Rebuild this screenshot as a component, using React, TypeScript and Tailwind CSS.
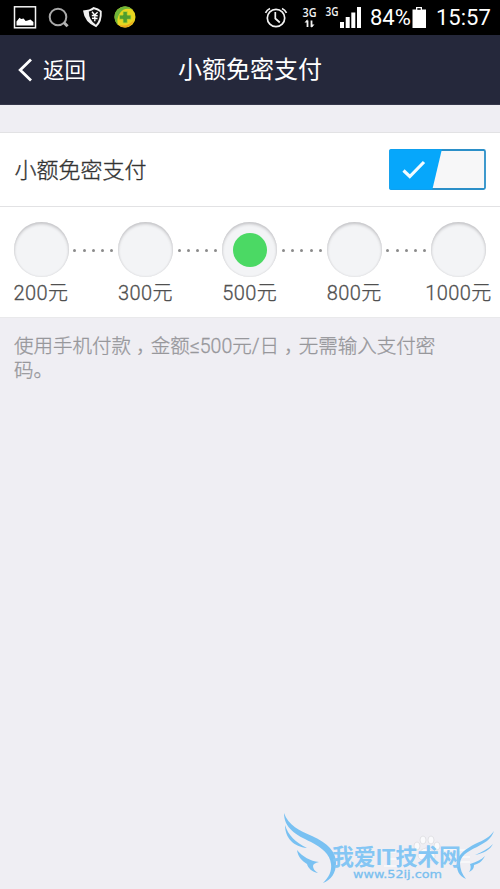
import React, { useState } from 'react';

const AMOUNTS = [200, 300, 500, 800, 1000];

const StatusBar: React.FC = () => (
  <div className="h-[35px] bg-black flex items-center text-white">
    <svg className="w-[150px] h-[35px] shrink-0" viewBox="0 0 150 35" fill="none">
      <rect x="14.5" y="6.8" width="21" height="21" stroke="#f4f4f4" strokeWidth="1.5" />
      <path d="M16.500 25.500v-4l3-3.700 1.600 1.200 2.500-.5 2 2.500 2-.6 2.800-.9 3 2.500v3.500z" fill="#fff" />
      <circle cx="58" cy="17" r="8.300" stroke="#a9a9a9" strokeWidth="2" />
      <path d="M63.800 22.500l3.800 3.800" stroke="#b5b5b5" strokeWidth="3" />
      <path d="M83 10.500Q90 10 93.500 7q5 1 8.200 4 .8 11-5.500 16.200Q84.500 22.500 83 10.500z" fill="#f1f1f1" />
      <path d="M88.800 11.500q3.500-.6 5.200-2.200 3 .5 5.900 2.700.3 8-4 12.800-7.100-4.800-7.100-13.300z" fill="#101010" />
      <path d="M92 11.800l2.700 3.200 2.900-2.800M91.800 15.500l5.900.3M92 18.200l5.500.3M94.800 15v6.300" stroke="#fff" strokeWidth="1.400" />
      <circle cx="125" cy="17" r="10.500" fill="#e9d620" />
      <path d="M114.500 17a10.500 10.500 0 0 1 18-7.500Q124 7 120 13t-2 12q-3.500-3.500-3.500-8z" fill="#6fb53a" />
      <path d="M118 24.800q10 3 16-5-2 6.500-8 7.600-5 .4-8-2.600z" fill="#eea61e" />
      <path d="M123 11.500h4.300v3.600h3.700v4.200h-3.700v3.600H123v-3.600h-3.700v-4.200h3.700z" fill="#4f9d2e" stroke="#c3d62c" strokeWidth="0.800" />
    </svg>
    <svg className="w-[105px] h-[35px] ml-auto shrink-0" viewBox="260 0 105 35" fill="none" stroke="#f2f2f2">
      <circle cx="276" cy="18" r="8.700" strokeWidth="1.700" />
      <path d="M275.300 12v6.500l4.500 4M265.500 12.800q1.500-3 4.500-4.300M282 8.500q3 1.300 4.500 4.300" strokeWidth="1.700" />
      <g fill="#f2f2f2" stroke="none" fontFamily="'Open Sans', sans-serif" fontWeight="600">
        <text x="302.500" y="17" fontSize="13" textLength="14" lengthAdjust="spacingAndGlyphs">3G</text>
        <text x="325.500" y="16" fontSize="12.500" textLength="13" lengthAdjust="spacingAndGlyphs">3G</text>
      </g>
      <path d="M307.500 27v-6.500M311.500 20.500V27" strokeWidth="1.800" />
      <path d="M304.500 22.500l3-3.200v3.200zM314.500 24.500l-3 3.300v-3.300z" fill="#f2f2f2" stroke="none" />
      <path d="M340 22h4v6h-4zM345.700 17h4v11h-4zM351.300 12.500h4V28h-4zM357 7h4v21h-4z" fill="#fff" stroke="none" />
    </svg>
    <span className="w-[41px] ml-[5px] pt-px text-[22px] leading-none whitespace-nowrap">84%</span>
    <svg className="w-[17px] h-[35px] shrink-0" viewBox="0 0 17 35">
      <path d="M1.500 9.500H5V7h6v2.500h4V28H1.500z" fill="#fff" />
      <path d="M6.300 8.200h3.400v1.600H6.300z" fill="#000" />
    </svg>
    <span className="w-[72px] pl-[8px] pt-px text-[22px] leading-none whitespace-nowrap">15:57</span>
  </div>
);

const Header: React.FC = () => (
  <header className="h-[70px] bg-[#25283b] grid grid-cols-[1fr_auto_1fr] items-center text-white border-b border-[#35374a]">
    <button className="flex items-center pl-[18px] text-[21.5px]">
      <svg className="w-[15px] h-6 mr-[10px]" viewBox="0 0 15 24" fill="none" stroke="#fff" strokeWidth="2.800">
        <path d="M13 1.500L2.200 12 13 22.500" />
      </svg>
      <span className="pt-1">返回</span>
    </button>
    <h1 className="text-[24px] leading-none">小额免密支付</h1>
  </header>
);

const Toggle: React.FC<{ on: boolean; onChange: () => void }> = ({ on, onChange }) => (
  <button role="switch" aria-checked={on} onClick={onChange} className="w-[97px] h-[41px]">
    <svg viewBox="0 0 97 41" className="w-full h-full" fill="none">
      <rect x="1" y="1" width="95" height="39" rx="1.500" fill="#f7f7f8" stroke="#2b8fc8" strokeWidth="1.800" />
      <path d="M1.500.3h51.400L43.300 40.700H1.500Q.3 40.700.3 39.500v-38Q.3.300 1.500.300z" fill="#06a7fb" />
      <path d="M14.500 21.500l6.300 6L35 13" stroke="#f2fbff" strokeWidth="3.200" />
    </svg>
  </button>
);

const Dots: React.FC = () => (
  <div className="flex-1 h-[55px] flex items-center justify-center gap-[6.2px] pt-0.5">
    {[0, 1, 2, 3, 4].map((i) => (
      <span key={i} className="size-[3px] rounded-full bg-[#8b8b8b]" />
    ))}
  </div>
);

// full-width comma centred in its cell
const Comma: React.FC = () => (
  <span className="px-[5px] [font-feature-settings:'halt']">，</span>
);

const Watermark: React.FC = () => (
  <svg className="w-[230px] h-[89px]" viewBox="270 800 230 89">
    <g fill="#fafafc" stroke="#dddde1" strokeWidth="0.800">
      <ellipse cx="417" cy="846" rx="3" ry="4" />
      <ellipse cx="423" cy="840" rx="3" ry="4" />
      <ellipse cx="431" cy="840" rx="3" ry="4" />
      <ellipse cx="437" cy="846" rx="3" ry="4" />
      <path d="M418 855q2-6 8-7 6 0 9 7 1 6-8 5-9 1-9-5z" />
    </g>
    <path d="M384 852h15v14h-15M440 850h29M455 857h15M390 859h8M457 862h13" fill="none" stroke="#fafafc" strokeWidth="1.500" />
    <g fill="#79c1f2">
      <path d="M284 813c4 12 16 18 28 23 16 7 24 16 24 27 0 10-5 17-13 20 6-6 9-12 8-19-1-10-9-16-20-22-15-7-27-14-27-29z" />
      <path d="M285 825c3 10 10 17 22 23-13-1-22-10-22-23z" />
      <path d="M297 850c6 7 13 11 22 12-4 1-6 2-6 4 0 3 2 5 5 7-6-1-10-5-11-9-5-3-9-7-10-14z" />
      <path d="M494 831c-3 9-10 12-17 16-11 5-16 9-17 16 0 6 2 11 6 16-7-3-10-9-9-17 2-9 9-13 18-18 9-4 15-7 19-13z" />
      <path d="M493 844c-3 6-9 9-18 11 7-3 13-6 18-11z" />
      <path d="M485 856c-3 6-7 8-11 9 0 3-1 5-5 7 2-3 2-5 1-8 6-2 11-4 15-8z" />
    </g>
    <text x="332" y="865" fontSize="22.500" fontWeight="700" fill="#84c6f4" textLength="129" lengthAdjust="spacingAndGlyphs">我爱IT技术网</text>
    <text x="353" y="878" fontSize="11" fill="#79bfef" stroke="#79bfef" strokeWidth="0.300" fontFamily="'DejaVu Sans', sans-serif" textLength="89" lengthAdjust="spacingAndGlyphs">www.52ij.com</text>
  </svg>
);

const App: React.FC = () => {
  const [enabled, setEnabled] = useState(true);
  const [amount, setAmount] = useState(500);

  return (
    <div className="relative w-[500px] h-[889px] overflow-hidden bg-[#efeef3] font-[Roboto,'Noto_Sans_CJK_SC',sans-serif]">
      <StatusBar />
      <Header />

      <main className="pt-[27px]">
        <section className="bg-white border-t border-[#e2e2e4]">
          <div className="h-[74px] pl-[14.5px] pr-[14px] flex items-center justify-between border-b border-[#e2e2e4]">
            <span className="text-[22px] text-[#333] font-light [-webkit-text-stroke:0.35px] pt-0.5">小额免密支付</span>
            <Toggle on={enabled} onChange={() => setEnabled(!enabled)} />
          </div>

          <div className="h-[111px] pt-[15px] pl-[13.5px] pr-[14px] flex items-start border-b border-[#e9e9eb]">
            {AMOUNTS.map((value, i) => (
              <React.Fragment key={value}>
                {i > 0 && <Dots />}
                <button onClick={() => setAmount(value)} className="w-[55px] flex flex-col items-center">
                  <span className="size-[55px] rounded-full bg-[#f3f4f6] shadow-[inset_0_2px_3px_#c6c6c9,inset_0_0_2px_#d2d2d5] flex items-center justify-center">
                    {amount === value && <span className="size-[34px] rounded-full bg-[#4bd964]" />}
                  </span>
                  <span className="mt-[3px] text-[20px] leading-[26px] tracking-[0.4px] font-light [-webkit-text-stroke:0.3px] text-[#505050] whitespace-nowrap">{value}元</span>
                </button>
              </React.Fragment>
            ))}
          </div>
        </section>

        <p className="px-[14px] pt-[17px] text-[19.5px] leading-[23.5px] font-light [-webkit-text-stroke:0.3px] text-[#97979b]">
          使用手机付款<Comma />金额≤500元/日<Comma />无需输入支付密
          <br />
          码。
        </p>
      </main>

      <div className="absolute right-0 bottom-0">
        <Watermark />
      </div>
    </div>
  );
};

export default App;
